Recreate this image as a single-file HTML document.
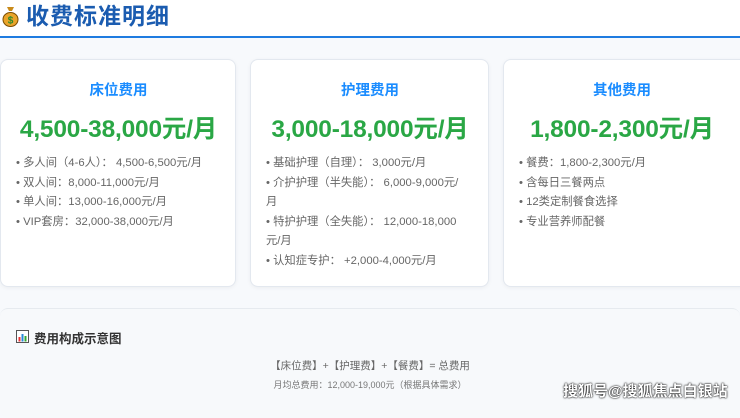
<!DOCTYPE html>
<html><head><meta charset="utf-8"><style>
*{margin:0;padding:0;box-sizing:border-box}
body{width:740px;height:406px;overflow:hidden;background:#f7f9fc;font-family:"Liberation Sans","Noto Sans CJK SC",sans-serif;position:relative}
.top{position:absolute;left:0;top:0;width:740px;height:38px;background:#fff;border-bottom:2px solid #1e7be0}
.top h1{position:absolute;left:26px;top:2px;font-size:23px;color:#1b5cb0;font-weight:bold;line-height:28px;letter-spacing:1px}
.bag{position:absolute;left:2px;top:6px;width:17px;height:21px}
.card{position:absolute;top:59px;height:228px;background:#fff;border:1px solid #e3e8ef;border-radius:8px;box-shadow:0 1px 4px rgba(0,0,0,.05);padding:0 8px 0 15px}
.card h2{text-align:center;font-size:14.5px;color:#1a8cff;margin-top:21px;line-height:20px;margin-right:6px}
.card .p{text-align:center;font-size:24.5px;color:#2aa745;font-weight:bold;margin-top:13px;line-height:32px;letter-spacing:-0.2px;white-space:nowrap;margin-right:6px}
.card ul{list-style:none;margin-top:8px}
.card li{font-size:11.3px;color:#666;line-height:19.6px;white-space:nowrap}
.card li:before{content:"• ";color:#666}
.bot{position:absolute;left:0;top:308px;width:740px;height:110px;background:#f7f9fb;border-top:1px solid #e6eaef;border-radius:8px}
.bot h3{position:absolute;left:34px;top:19px;font-size:12.5px;color:#333;font-weight:bold}
.ic{position:absolute;left:16px;top:21px;width:13px;height:13px}
.f1{position:absolute;left:0;width:740px;text-align:center;top:49px;font-size:10.5px;color:#666}
.f2{position:absolute;left:0;width:740px;text-align:center;top:69px;font-size:9px;color:#777}
.wm{position:absolute;left:563px;top:380px;font-size:15px;color:#fff;font-weight:bold;text-shadow:0 0 2px #000,0 0 1px #000}
</style></head><body>
<div class="top">
<svg class="bag" viewBox="0 0 17 21"><path d="M5 1h7l-2 4h-3z" fill="#c98a1a"/><ellipse cx="8.5" cy="13.5" rx="7.5" ry="7" fill="#e9a42a" stroke="#7a4d00" stroke-width="1"/><text x="8.5" y="17.5" font-size="10" text-anchor="middle" fill="#2a8a2a" font-weight="bold">$</text></svg>
<h1>收费标准明细</h1></div>
<div class="card" style="left:0;width:236px"><h2>床位费用</h2><div class="p">4,500-38,000元/月</div><ul><li>多人间（4-6人）： 4,500-6,500元/月</li><li>双人间：8,000-11,000元/月</li><li>单人间：13,000-16,000元/月</li><li>VIP套房：32,000-38,000元/月</li></ul></div>
<div class="card" style="left:250px;width:239px"><h2>护理费用</h2><div class="p">3,000-18,000元/月</div><ul><li>基础护理（自理）： 3,000元/月</li><li>介护护理（半失能）： 6,000-9,000元/<br>月</li><li>特护护理（全失能）： 12,000-18,000<br>元/月</li><li>认知症专护： +2,000-4,000元/月</li></ul></div>
<div class="card" style="left:503px;width:245px"><h2 style="margin-right:14px">其他费用</h2><div class="p" style="margin-right:14px">1,800-2,300元/月</div><ul><li>餐费：1,800-2,300元/月</li><li>含每日三餐两点</li><li>12类定制餐食选择</li><li>专业营养师配餐</li></ul></div>
<div class="bot"><svg class="ic" viewBox="0 0 13 13"><rect x="0.5" y="0.5" width="12" height="12" fill="#fff" stroke="#555"/><rect x="2.5" y="7" width="2" height="4.5" fill="#e33"/><rect x="5.5" y="4" width="2" height="7.5" fill="#2a8ad8"/><rect x="8.5" y="6" width="2" height="5.5" fill="#3a3"/></svg><h3>费用构成示意图</h3>
<div class="f1">【床位费】+【护理费】+【餐费】= 总费用</div>
<div class="f2">月均总费用：12,000-19,000元（根据具体需求）</div></div>
<div class="wm">搜狐号@搜狐焦点白银站</div>
</body></html>
